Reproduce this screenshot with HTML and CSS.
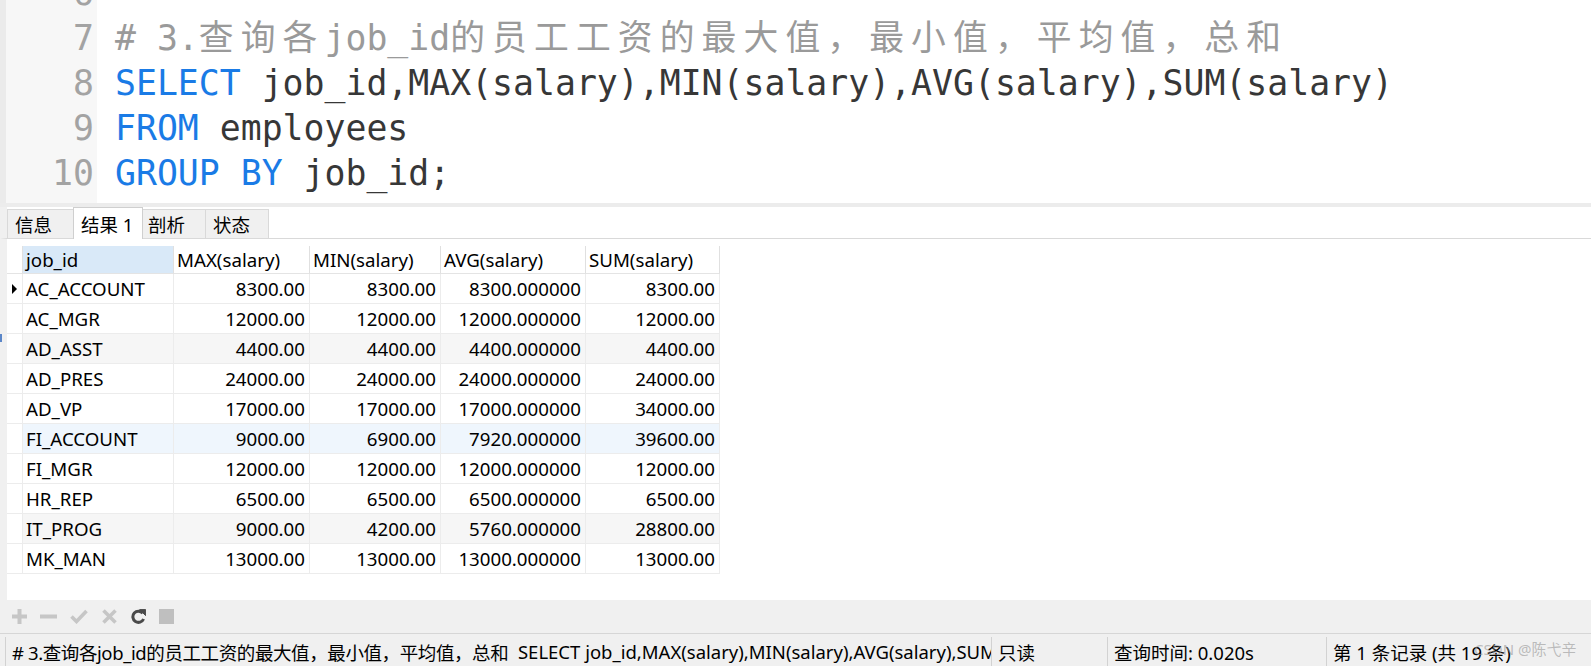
FILE: index.html
```html
<!DOCTYPE html>
<html lang="zh-CN">
<head>
<meta charset="utf-8">
<title>Navicat 查询</title>
<link rel="stylesheet" href="styles.css">
</head>
<body>
<div class="app">
  <div class="editor">
    <div class="gutter">
      <div class="gutter-inner">
        <div class="ln">6</div>
        <div class="ln">7</div>
        <div class="ln">8</div>
        <div class="ln">9</div>
        <div class="ln">10</div>
      </div>
    </div>
    <div class="code">
      <div class="code-inner">
        <div class="line"> </div>
        <div class="line cm"># 3.<span class="cjk">查询各</span>job_id<span class="cjk">的员工工资的最大值，最小值，平均值，总和</span></div>
        <div class="line"><span class="kw">SELECT</span> job_id,MAX(salary),MIN(salary),AVG(salary),SUM(salary)</div>
        <div class="line"><span class="kw">FROM</span> employees</div>
        <div class="line"><span class="kw">GROUP BY</span> job_id;</div>
      </div>
    </div>
  </div>
  <div class="split"></div>
  <div class="tabbar">
    <div class="tab t1">信息</div>
    <div class="tab active">结果 1</div>
    <div class="tab t3">剖析</div>
    <div class="tab t4">状态</div>
  </div>
  <div class="grid-panel">
    <div class="result">
      <div class="cell hd ind"></div>
      <div class="cell hd sel">job_id</div>
      <div class="cell hd">MAX(salary)</div>
      <div class="cell hd">MIN(salary)</div>
      <div class="cell hd">AVG(salary)</div>
      <div class="cell hd">SUM(salary)</div>

      <div class="cell ind"><span class="arrow"></span></div>
      <div class="cell">AC_ACCOUNT</div>
      <div class="cell num">8300.00</div>
      <div class="cell num">8300.00</div>
      <div class="cell num">8300.000000</div>
      <div class="cell num">8300.00</div>

      <div class="cell ind"></div>
      <div class="cell">AC_MGR</div>
      <div class="cell num">12000.00</div>
      <div class="cell num">12000.00</div>
      <div class="cell num">12000.000000</div>
      <div class="cell num">12000.00</div>

      <div class="cell ind"></div>
      <div class="cell gray">AD_ASST</div>
      <div class="cell num gray">4400.00</div>
      <div class="cell num gray">4400.00</div>
      <div class="cell num gray">4400.000000</div>
      <div class="cell num gray">4400.00</div>

      <div class="cell ind"></div>
      <div class="cell">AD_PRES</div>
      <div class="cell num">24000.00</div>
      <div class="cell num">24000.00</div>
      <div class="cell num">24000.000000</div>
      <div class="cell num">24000.00</div>

      <div class="cell ind"></div>
      <div class="cell">AD_VP</div>
      <div class="cell num">17000.00</div>
      <div class="cell num">17000.00</div>
      <div class="cell num">17000.000000</div>
      <div class="cell num">34000.00</div>

      <div class="cell ind"></div>
      <div class="cell blue">FI_ACCOUNT</div>
      <div class="cell num blue">9000.00</div>
      <div class="cell num blue">6900.00</div>
      <div class="cell num blue">7920.000000</div>
      <div class="cell num blue">39600.00</div>

      <div class="cell ind"></div>
      <div class="cell">FI_MGR</div>
      <div class="cell num">12000.00</div>
      <div class="cell num">12000.00</div>
      <div class="cell num">12000.000000</div>
      <div class="cell num">12000.00</div>

      <div class="cell ind"></div>
      <div class="cell">HR_REP</div>
      <div class="cell num">6500.00</div>
      <div class="cell num">6500.00</div>
      <div class="cell num">6500.000000</div>
      <div class="cell num">6500.00</div>

      <div class="cell ind"></div>
      <div class="cell gray">IT_PROG</div>
      <div class="cell num gray">9000.00</div>
      <div class="cell num gray">4200.00</div>
      <div class="cell num gray">5760.000000</div>
      <div class="cell num gray">28800.00</div>

      <div class="cell ind"></div>
      <div class="cell">MK_MAN</div>
      <div class="cell num">13000.00</div>
      <div class="cell num">13000.00</div>
      <div class="cell num">13000.000000</div>
      <div class="cell num">13000.00</div>
    </div>
  </div>
  <div class="toolbar">
    <svg class="ic i-plus" viewBox="0 0 15 15"><rect x="5.5" y="0" width="4" height="15"/><rect x="0" y="5.5" width="15" height="4"/></svg>
    <svg class="ic i-minus" viewBox="0 0 17 15"><rect x="0" y="5.5" width="17" height="4"/></svg>
    <svg class="ic i-check" viewBox="0 0 18 15"><polyline points="1.5,7.5 6.5,12.5 16.5,2" fill="none" stroke-width="3.6"/></svg>
    <svg class="ic i-x" viewBox="0 0 17 15"><path d="M2.5 1.5 L14.5 13.5 M14.5 1.5 L2.5 13.5" fill="none" stroke-width="3.6"/></svg>
    <svg class="ic i-refresh" viewBox="0 0 15 15"><path d="M11.8 4.2 A5.6 5.6 0 1 0 12.6 10" fill="none" stroke-width="3"/><polygon points="8.6,0.6 14.6,0.6 14.6,6.6"/></svg>
    <svg class="ic i-stop" viewBox="0 0 15 15"><rect x="0" y="0" width="15" height="15"/></svg>
  </div>
  <div class="status">
    <div class="sec s1"><span class="tight">#&nbsp;3.查询各job_id的员工工资的最大值，最小值，平均值，总和</span>&nbsp;&nbsp;SELECT job_id,MAX(salary),MIN(salary),AVG(salary),SUM(salary) FROM employees GROUP BY job_id;</div>
    <div class="sec s2">只读</div>
    <div class="sec s3">查询时间: 0.020s</div>
    <div class="sec s4">第 1 条记录 (共 19 条)</div>
  </div>
</div>
<div class="edge-mark"></div>
<div class="watermark">CSDN @陈弋辛</div>
</body>
</html>
```

FILE: styles.css
```css
* { box-sizing: border-box; }
html, body { margin: 0; padding: 0; }
body {
  width: 1591px;
  height: 666px;
  overflow: hidden;
  background: #f0f0f0;
  font-family: "Noto Sans", "Noto Sans CJK SC", sans-serif;
  position: relative;
  color: #000;
}
.app { display: flex; flex-direction: column; height: 666px; }

/* ---------- editor ---------- */
.editor {
  height: 203px;
  flex: none;
  display: flex;
  overflow: hidden;
  background: #fff;
  border-left: 6px solid #ebebeb;
}
.gutter { width: 91px; flex: none; background: #f7f7f7; }
.code { flex: 1; padding-left: 18px; }
.gutter-inner, .code-inner {
  margin-top: -29px;
  font-family: "DejaVu Sans Mono", "Noto Sans CJK SC", monospace;
  font-size: 34.8px;
  line-height: 45px;
}
.ln, .line { height: 45px; white-space: pre; }
.gutter-inner { text-align: right; padding-right: 3px; color: #a3a3a3; }
.code-inner { color: #373737; }
.kw { color: #1a7be6; }
.cm { color: #9a9a9a; }
.cjk { letter-spacing: 7.1px; }

.split { height: 4px; flex: none; background: #ececec; }

/* ---------- tabs ---------- */
.tabbar {
  height: 32px;
  flex: none;
  display: flex;
  align-items: flex-end;
  background: #fff;
  border-left: 7px solid #f0f0f0;
  border-bottom: 1px solid #d9d9d9;
  font-size: 18.5px;
}
.tab {
  height: 29px;
  display: flex;
  align-items: center;
  padding-left: 7px;
  background: #f0f0f0;
  border: 1px solid #d9d9d9;
  border-bottom: none;
  margin-right: -1px;
  white-space: nowrap;
}
.t1 { width: 67px; }
.t3 { width: 64px; padding-left: 5px; }
.t4 { width: 64px; }
.tab.active {
  width: 70px;
  height: 32px;
  margin-bottom: -1px;
  background: #fff;
  border-color: #cfcfcf;
  position: relative;
  z-index: 1;
}

/* ---------- result grid ---------- */
.grid-panel {
  flex: 1;
  background: #fff;
  border-left: 7px solid #f0f0f0;
  padding-top: 7px;
}
.result {
  display: grid;
  grid-template-columns: 16px 151px 136px 131px 145px 134px;
  width: max-content;
}
.cell {
  height: 30px;
  display: flex;
  align-items: center;
  padding: 0 3px;
  border-right: 1px solid #ececec;
  border-bottom: 1px solid #ececec;
  white-space: nowrap;
  overflow: hidden;
  font-size: 18.7px;
  color: #000;
}
.cell.hd { height: 28px; border-right-color: #e0e0e0; border-bottom-color: #e4e4e4; }
.cell.sel { background: #d9e9f8; }
.cell.num { justify-content: flex-end; padding-right: 4px; }
.cell.ind { padding: 0; justify-content: center; }
.cell.gray { background: #f6f6f6; }
.cell.blue { background: #eff6fd; }
.arrow {
  width: 0; height: 0;
  border-left: 5px solid #000;
  border-top: 5px solid transparent;
  border-bottom: 5px solid transparent;
}

/* ---------- toolbar ---------- */
.toolbar {
  height: 33px;
  flex: none;
  display: flex;
  align-items: center;
  gap: 13px;
  padding-left: 12px;
  background: #f0f0f0;
}
.ic { height: 15px; display: block; }
.i-plus { width: 15px; fill: #c6c6c6; }
.i-minus { width: 17px; fill: #c6c6c6; }
.i-check { width: 18px; stroke: #c6c6c6; }
.i-x { width: 17px; stroke: #c6c6c6; }
.i-refresh { width: 15px; stroke: #4a4a4a; fill: #4a4a4a; }
.i-refresh path { fill: none; }
.i-stop { width: 15px; fill: #bfbfbf; }

/* ---------- status bar ---------- */
.status {
  height: 33px;
  flex: none;
  display: flex;
  background: #f0f0f0;
  border-top: 1px solid #d6d6d6;
  font-size: 18.5px;
  color: #000;
}
.sec {
  display: flex;
  align-items: center;
  margin-top: 3px;
  padding-left: 6px;
  border-left: 1px solid #d2d2d2;
  white-space: pre;
  overflow: hidden;
}
.tight { letter-spacing: -0.4px; }
.s1 { margin-left: 5px; width: 986px; }
.s2 { width: 116px; }
.s3 { width: 219px; }
.s4 { flex: 1; }

.edge-mark {
  position: absolute;
  left: 0;
  top: 334px;
  width: 2px;
  height: 8px;
  background: #5b86c8;
}
.watermark {
  position: absolute;
  left: 1474px;
  top: 638px;
  font-size: 15px;
  color: rgba(150, 150, 150, 0.6);
  white-space: nowrap;
  font-family: "Noto Sans", "Noto Sans CJK SC", sans-serif;
}
```
